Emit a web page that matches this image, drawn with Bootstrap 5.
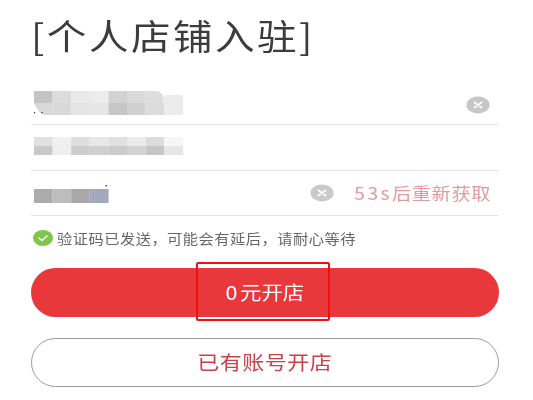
<!doctype html>
<html lang="zh">
<head>
<meta charset="utf-8">
<link rel="stylesheet" href="https://cdn.jsdelivr.net/npm/bootstrap@5.3.0/dist/css/bootstrap.min.css">
<style>
html,body{height:400px;overflow:hidden;background:#fff}
body{font-family:"Noto Sans CJK SC","Liberation Sans",sans-serif}
.shop-page{width:468px;margin-left:31px;filter:blur(.35px)}
.shop-title{height:80px;margin:0;padding-top:13px;font-size:35px;font-weight:400;line-height:44px;letter-spacing:2.2px;color:#3c3c3c;white-space:nowrap}
.wide-text{display:inline-block;transform:scaleX(1.13)}
.wide-left{transform-origin:left center}
.wide-right{transform-origin:right center}
.field-row{height:45.4px;border-bottom:1px solid #e4e4e4;padding-left:3px}
.mosaic-a{margin-top:2px}
.mosaic-b{margin-bottom:3px}
.mosaic-c{margin-top:2px}
.clear-dot{width:24px;height:18px;flex:none}
.clear-low{margin-top:5px}
.clear-end{margin-right:9px}
.resend{font-size:17px;letter-spacing:.5px;color:#e59a9d;margin-left:36.5px;margin-right:8px;white-space:nowrap}
.resend-num{letter-spacing:2.200px}
.tip-row{height:44px;margin-bottom:8px;padding-left:2px;font-size:13.5px;letter-spacing:.42px;color:#666;white-space:nowrap}
.tip-icon{width:20px;height:16px;flex:none;margin-right:4px}
.pill-btn{display:block;width:100%;border-radius:25px;height:49px;font-size:19.5px;letter-spacing:.4px;text-align:center;padding:0}
.pill-red{background:#e8383b;color:#fff;border:0;font-size:19px;letter-spacing:0;word-spacing:-2px}
.pill-line{background:#fff;color:#c8424a;border:1px solid #9b9b9b;margin-top:21px;padding-bottom:3px}
.btn-wrap{position:relative}
.red-frame{position:absolute;left:165px;top:-6px;width:134px;height:59px;border:2px solid #f01010;border-radius:2px;pointer-events:none}
</style>
</head>
<body>
<div class="shop-page">
  <h1 class="shop-title"><span class="wide-text wide-left">[个人店铺入驻]</span></h1>

  <div class="field-row d-flex align-items-center justify-content-between">
    <svg class="mosaic-a" width="150" height="24" viewBox="0 0 150 24" aria-hidden="true"><rect x="0" width="18.6" height="12" fill="#c4c4c4"/><rect x="18.6" width="18.6" height="12" fill="#dcdcdc"/><rect x="37.2" width="18.6" height="12" fill="#e9e9e9"/><rect x="55.800" width="18.6" height="12" fill="#ececec"/><rect x="74.400" width="18.6" height="12" fill="#d2d2d2"/><rect x="93" width="18.6" height="12" fill="#dadada"/><path d="M111.600 0h10a8 8 0 0 1 8 8v4h-18z" fill="#dedede"/><rect x="130" y="4" width="19" height="8" fill="#ececec"/><path d="M0 12h18.600v12h-8q-5 0-10.600-12z" fill="#d8d8d8"/><rect x="18.6" y="12" width="18.6" height="12" fill="#d9d9d9"/><rect x="37.2" y="12" width="18.6" height="12" fill="#e4e4e4"/><rect x="55.800" y="12" width="18.6" height="12" fill="#e6e6e6"/><rect x="74.400" y="12" width="18.6" height="12" fill="#c6c6c6"/><rect x="93" y="12" width="18.6" height="12" fill="#d0d0d0"/><rect x="111.600" y="12" width="18.400" height="12" fill="#dcdcdc"/><rect x="130" y="12" width="19" height="12" fill="#ececec"/><rect x="0" y="21" width="1.200" height="1.200" fill="#333"/><rect x="7.500" y="21" width="1.200" height="1.200" fill="#333"/></svg>
    <svg class="clear-dot clear-low clear-end" viewBox="0 0 24 18" aria-hidden="true"><ellipse cx="12" cy="9" rx="11.5" ry="8.5" fill="#c6c6c6"/><path d="M8.500 6.500l7 5M15.500 6.500l-7 5" stroke="#fff" stroke-width="1.800" stroke-linecap="round"/></svg>
  </div>

  <div class="field-row d-flex align-items-center">
    <svg class="mosaic-b" width="150" height="18" viewBox="0 0 150 18" aria-hidden="true"><rect x="0" width="18.6" height="9" fill="#e0e0e0"/><rect x="18.6" width="18.6" height="9" fill="#f0f0f0"/><rect x="37.2" width="18.6" height="9" fill="#dedede"/><rect x="55.800" width="18.6" height="9" fill="#e8e8e8"/><rect x="74.400" width="18.6" height="9" fill="#e0e0e0"/><rect x="93" width="18.6" height="9" fill="#ebebeb"/><rect x="111.600" width="18.600" height="9" fill="#dcdcdc"/><rect x="130.200" width="19" height="9" fill="#f6f6f6"/><rect x="0" y="9" width="18.6" height="9" fill="#c9c9c9"/><rect x="18.6" y="9" width="18.6" height="9" fill="#efefef"/><rect x="37.2" y="9" width="18.6" height="9" fill="#cdcdcd"/><rect x="55.800" y="9" width="18.6" height="9" fill="#cfcfcf"/><rect x="74.400" y="9" width="18.6" height="9" fill="#cbcbcb"/><rect x="93" y="9" width="18.6" height="9" fill="#d2d2d2"/><rect x="111.600" y="9" width="18.600" height="9" fill="#c6c6c6"/><rect x="130.200" y="9" width="19" height="9" fill="#e6e6e6"/></svg>
  </div>

  <div class="field-row d-flex align-items-center justify-content-between">
    <svg class="mosaic-c" width="75" height="18" viewBox="0 0 75 18" aria-hidden="true"><rect x="0" y="4" width="18.6" height="14" fill="#acacac"/><rect x="18.6" y="4" width="18.6" height="14" fill="#bdbdbd"/><rect x="37.2" y="4" width="18.6" height="14" fill="#a8a8a8"/><rect x="55.800" y="4" width="18.800" height="14" fill="#a3a8bd"/><rect x="71.500" y="0" width="1.400" height="1.400" fill="#333"/></svg>
    <div class="d-flex align-items-center">
      <svg class="clear-dot" viewBox="0 0 24 18" aria-hidden="true"><ellipse cx="12" cy="9" rx="11.5" ry="8.5" fill="#c9c9c9"/><path d="M8.500 6.500l7 5M15.500 6.500l-7 5" stroke="#fff" stroke-width="1.800" stroke-linecap="round"/></svg>
      <span class="resend wide-text wide-right"><span class="resend-num">53s</span>后重新获取</span>
    </div>
  </div>

  <div class="tip-row d-flex align-items-center">
    <svg class="tip-icon" viewBox="0 0 20 16" aria-hidden="true"><ellipse cx="10" cy="8" rx="10" ry="8" fill="#7fc64a"/><path d="M6 8l3 2.500 5-4.500" fill="none" stroke="#fff" stroke-width="1.500" stroke-linecap="round"/></svg>
    <span class="wide-text wide-left">验证码已发送，可能会有延后，请耐心等待</span>
  </div>

  <div class="btn-wrap">
    <button type="button" class="pill-btn pill-red"><span class="wide-text">0 元开店</span></button>
    <span class="red-frame"></span>
  </div>
  <button type="button" class="pill-btn pill-line"><span class="wide-text">已有账号开店</span></button>
</div>
<script src="https://cdn.jsdelivr.net/npm/bootstrap@5.3.0/dist/js/bootstrap.bundle.min.js"></script>
</body>
</html>
